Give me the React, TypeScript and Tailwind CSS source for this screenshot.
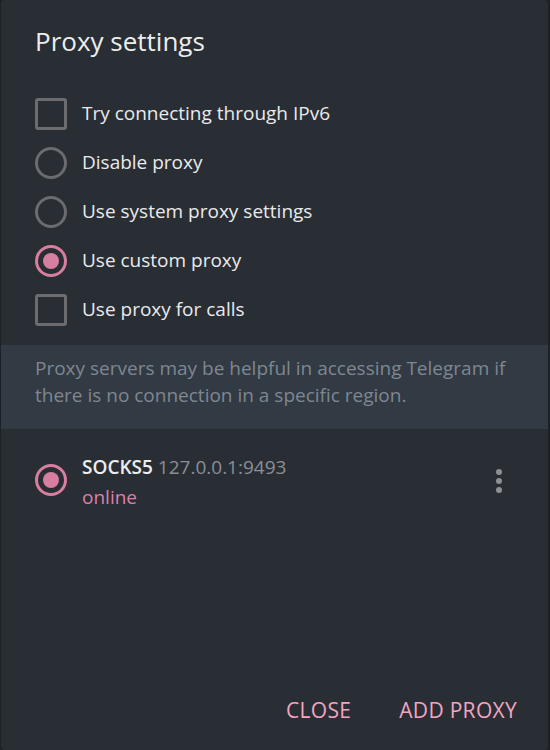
import React, { useState } from "react";

const font = { fontFamily: '"Open Sans", "Noto Sans", sans-serif' };

const Checkbox: React.FC<{ checked?: boolean }> = ({ checked }) => (
    <div className={`w-[32px] h-[32px] rounded-[3px] border-[3px] ${checked ? "border-[#d87ea0]" : "border-[#6a6c70]"}`} />
);

const Radio: React.FC<{ checked?: boolean }> = ({ checked }) => (
    <div className={`w-[32px] h-[32px] rounded-full border-[3px] flex items-center justify-center ${checked ? "border-[#d87ea0]" : "border-[#6a6c70]"}`}>
        {checked && <div className="w-[16px] h-[16px] rounded-full bg-[#d87ea0]" />}
    </div>
);

const Row: React.FC<{ control: React.ReactNode; label: string }> = ({ control, label }) => (
    <div className="flex items-center h-[49px] px-[34px] gap-[15px]">
        {control}
        <span className="text-[19px] text-[#e9eaeb]">{label}</span>
    </div>
);

export default function App() {
    const [mode] = useState("custom");

    return (
        <div className="w-[550px] h-[750px] bg-[#1d2025]" style={font}>
            <div className="ml-px mr-[2px] h-full bg-[#292d34] rounded-[4px] flex flex-col">
                <h1 className="px-[34px] pt-[24px] text-[26px] text-[#eceded] leading-[34px]">Proxy settings</h1>

                <div className="mt-[31px]">
                    <Row control={<Checkbox />} label="Try connecting through IPv6" />
                    <Row control={<Radio checked={mode === "disabled"} />} label="Disable proxy" />
                    <Row control={<Radio checked={mode === "system"} />} label="Use system proxy settings" />
                    <Row control={<Radio checked={mode === "custom"} />} label="Use custom proxy" />
                    <Row control={<Checkbox />} label="Use proxy for calls" />
                </div>

                <div className="mt-[11px] bg-[#323a44] px-[34px] pt-[10px] pb-[20px] text-[19px] leading-[27px] text-[#7f8790]">
                    Proxy servers may be helpful in accessing Telegram if there is no connection in a specific region.
                </div>

                <div className="flex items-center px-[34px] pt-[23px] gap-[15px]">
                    <div className="mb-[4px]">
                        <Radio checked />
                    </div>
                    <div className="flex-1">
                        <div className="text-[19px] leading-[30px]">
                            <span className="font-semibold text-[#eceded]">SOCKS5</span>{" "}
                            <span className="text-[#8b8f94]">127.0.0.1:9493</span>
                        </div>
                        <div className="text-[19px] leading-[30px] text-[#dc80a7]">online</div>
                    </div>
                    <div className="flex flex-col gap-[3px] pr-[12px] mb-[2px]">
                        <span className="w-[6px] h-[6px] rounded-full bg-[#8e9095]" />
                        <span className="w-[6px] h-[6px] rounded-full bg-[#8e9095]" />
                        <span className="w-[6px] h-[6px] rounded-full bg-[#8e9095]" />
                    </div>
                </div>

                <div className="mt-auto flex justify-end gap-[48px] pr-[31px] pb-[24px]">
                    <button className="text-[21px] tracking-[0.3px] text-[#f2a5c2]">CLOSE</button>
                    <button className="text-[21px] tracking-[0.3px] text-[#f2a5c2]">ADD PROXY</button>
                </div>
            </div>
        </div>
    );
}
